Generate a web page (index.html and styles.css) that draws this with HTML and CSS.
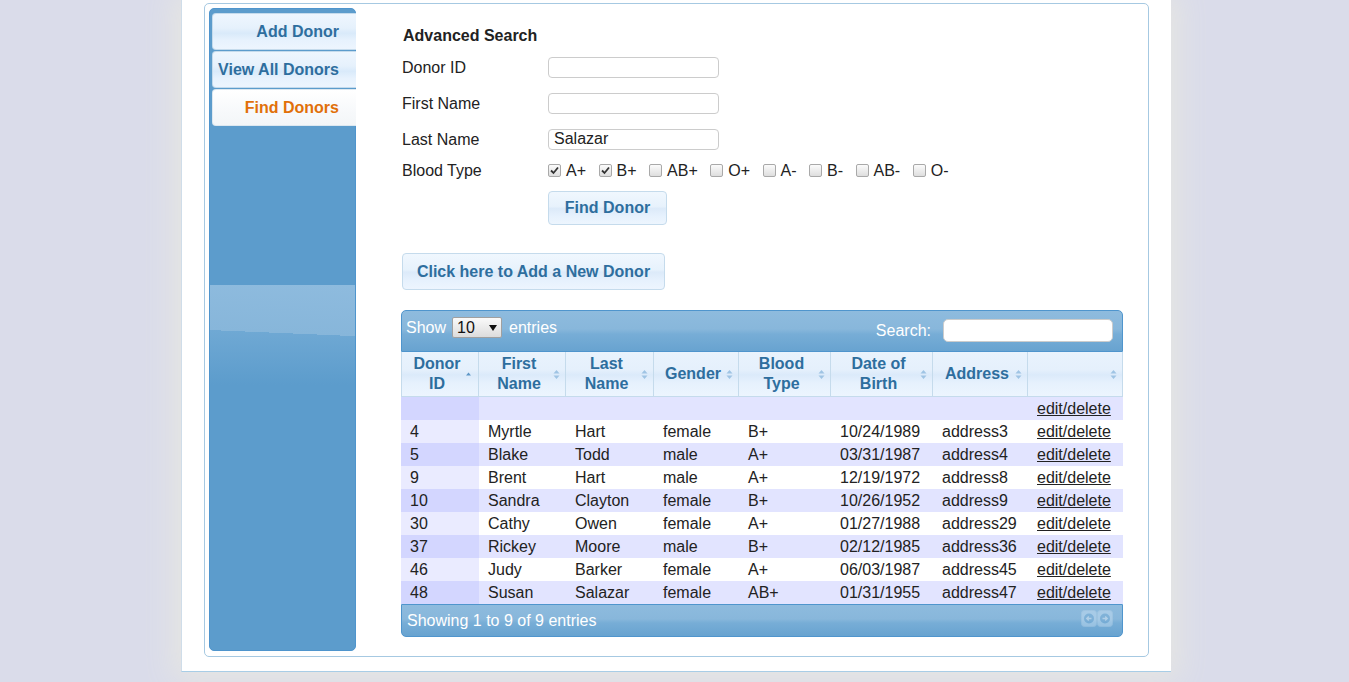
FILE: index.html
```html
<!DOCTYPE html>
<html>
<head>
<meta charset="utf-8">
<title>Find Donors</title>
<link rel="stylesheet" href="styles.css">
</head>
<body>
<div class="page">
  <div class="box">
    <nav class="sidebar">
      <a class="tab">Add Donor</a>
      <a class="tab">View All Donors</a>
      <a class="tab active">Find Donors</a>
    </nav>
    <main class="content">
      <h3 class="title">Advanced Search</h3>
      <div class="form">
        <div class="row"><label class="lbl">Donor ID</label><input class="text" type="text"></div>
        <div class="row"><label class="lbl">First Name</label><input class="text" type="text"></div>
        <div class="row"><label class="lbl">Last Name</label><input class="text" type="text" value="Salazar"></div>
        <div class="row blood"><label class="lbl">Blood Type</label>
          <div class="checks">
            <label class="chk"><input type="checkbox" checked>A+</label>
            <label class="chk"><input type="checkbox" checked>B+</label>
            <label class="chk"><input type="checkbox">AB+</label>
            <label class="chk"><input type="checkbox">O+</label>
            <label class="chk"><input type="checkbox">A-</label>
            <label class="chk"><input type="checkbox">B-</label>
            <label class="chk"><input type="checkbox">AB-</label>
            <label class="chk"><input type="checkbox">O-</label>
          </div>
        </div>
        <div class="btnrow"><button class="btn find">Find Donor</button></div>
      </div>
      <button class="btn add">Click here to Add a New Donor</button>

      <div class="dt">
        <div class="toolbar top">
          <div class="length">Show<select class="sel"><option>10</option></select>entries</div>
          <div class="filter">Search:<input class="search" type="text"></div>
        </div>
        <table class="grid">
          <colgroup>
            <col class="c1"><col class="c2"><col class="c3"><col class="c4"><col class="c5"><col class="c6"><col class="c7"><col class="c8">
          </colgroup>
          <thead>
            <tr>
              <th>Donor ID<svg class="sort" width="7" height="11" viewBox="0 0 7 11"><path d="M3.5 3.5 L6 6.5 H1Z" fill="#5d96c6"/></svg></th>
              <th>First Name<svg class="sort" width="7" height="11" viewBox="0 0 7 11"><path d="M3.5 1 L6.5 4.5 H0.5Z M3.5 10 L0.5 6.5 H6.5Z" fill="#9fc4e4"/></svg></th>
              <th>Last Name<svg class="sort" width="7" height="11" viewBox="0 0 7 11"><path d="M3.5 1 L6.5 4.5 H0.5Z M3.5 10 L0.5 6.5 H6.5Z" fill="#9fc4e4"/></svg></th>
              <th>Gender<svg class="sort" width="7" height="11" viewBox="0 0 7 11"><path d="M3.5 1 L6.5 4.5 H0.5Z M3.5 10 L0.5 6.5 H6.5Z" fill="#9fc4e4"/></svg></th>
              <th>Blood Type<svg class="sort" width="7" height="11" viewBox="0 0 7 11"><path d="M3.5 1 L6.5 4.5 H0.5Z M3.5 10 L0.5 6.5 H6.5Z" fill="#9fc4e4"/></svg></th>
              <th>Date of Birth<svg class="sort" width="7" height="11" viewBox="0 0 7 11"><path d="M3.5 1 L6.5 4.5 H0.5Z M3.5 10 L0.5 6.5 H6.5Z" fill="#9fc4e4"/></svg></th>
              <th>Address<svg class="sort" width="7" height="11" viewBox="0 0 7 11"><path d="M3.5 1 L6.5 4.5 H0.5Z M3.5 10 L0.5 6.5 H6.5Z" fill="#9fc4e4"/></svg></th>
              <th><svg class="sort" width="7" height="11" viewBox="0 0 7 11"><path d="M3.5 1 L6.5 4.5 H0.5Z M3.5 10 L0.5 6.5 H6.5Z" fill="#9fc4e4"/></svg></th>
            </tr>
          </thead>
          <tbody>
            <tr class="odd"><td></td><td></td><td></td><td></td><td></td><td></td><td></td><td><a class="link">edit/delete</a></td></tr>
            <tr class="even"><td>4</td><td>Myrtle</td><td>Hart</td><td>female</td><td>B+</td><td>10/24/1989</td><td>address3</td><td><a class="link">edit/delete</a></td></tr>
            <tr class="odd"><td>5</td><td>Blake</td><td>Todd</td><td>male</td><td>A+</td><td>03/31/1987</td><td>address4</td><td><a class="link">edit/delete</a></td></tr>
            <tr class="even"><td>9</td><td>Brent</td><td>Hart</td><td>male</td><td>A+</td><td>12/19/1972</td><td>address8</td><td><a class="link">edit/delete</a></td></tr>
            <tr class="odd"><td>10</td><td>Sandra</td><td>Clayton</td><td>female</td><td>B+</td><td>10/26/1952</td><td>address9</td><td><a class="link">edit/delete</a></td></tr>
            <tr class="even"><td>30</td><td>Cathy</td><td>Owen</td><td>female</td><td>A+</td><td>01/27/1988</td><td>address29</td><td><a class="link">edit/delete</a></td></tr>
            <tr class="odd"><td>37</td><td>Rickey</td><td>Moore</td><td>male</td><td>B+</td><td>02/12/1985</td><td>address36</td><td><a class="link">edit/delete</a></td></tr>
            <tr class="even"><td>46</td><td>Judy</td><td>Barker</td><td>female</td><td>A+</td><td>06/03/1987</td><td>address45</td><td><a class="link">edit/delete</a></td></tr>
            <tr class="odd"><td>48</td><td>Susan</td><td>Salazar</td><td>female</td><td>AB+</td><td>01/31/1955</td><td>address47</td><td><a class="link">edit/delete</a></td></tr>
          </tbody>
        </table>
        <div class="toolbar bottom">
          <div class="info">Showing 1 to 9 of 9 entries</div>
          <svg class="pager" width="32" height="17" viewBox="0 0 32 17">
            <g opacity="0.35">
              <rect x="0.5" y="0.5" width="15" height="16" rx="3" fill="#dfeffc" stroke="#c5dbec"/>
              <rect x="16.5" y="0.5" width="15" height="16" rx="3" fill="#dfeffc" stroke="#c5dbec"/>
              <circle cx="8" cy="8.5" r="5" fill="#6fa7d3"/>
              <circle cx="24" cy="8.5" r="5" fill="#6fa7d3"/>
              <path d="M10.5 8.5 H6 M7.8 6.5 L5.8 8.5 L7.8 10.5" stroke="#fff" stroke-width="1.4" fill="none"/>
              <path d="M21.5 8.5 H26 M24.2 6.5 L26.2 8.5 L24.2 10.5" stroke="#fff" stroke-width="1.4" fill="none"/>
            </g>
          </svg>
        </div>
      </div>
    </main>
  </div>
</div>
</body>
</html>
```

FILE: styles.css
```css
html, body {
  margin: 0;
  padding: 0;
}

body {
  background: #dadcea;
  font-family: "Liberation Sans", Arial, sans-serif;
  font-size: 16px;
  color: #222;
  height: 682px;
  overflow: hidden;
}

.page {
  margin-left: 181px;
  width: 990px;
  box-sizing: border-box;
  background: #fff;
  border-left: 1px solid #cfdde9;
  border-bottom: 1px solid #a8cde6;
  padding: 3px 22px 14px 22px;
  box-shadow: 0 0 28px 8px #e6e6e2;
}

.box {
  display: flex;
  align-items: flex-start;
  border: 1px solid #a6c9e2;
  border-radius: 5px;
  padding: 4px 4px 5px 4px;
}

/* Sidebar */
.sidebar {
  width: 147px;
  height: 643px;
  box-sizing: border-box;
  flex: none;
  border: 1px solid #4f95cd;
  border-radius: 5px;
  padding: 4px 0 0 2px;
  display: flex;
  flex-direction: column;
  gap: 1px;
  background-color: #5c9ccc;
  background-image:
    linear-gradient(182.4deg, #8ebbde 0, #87b6da 88%, rgba(135,182,218,0) 88%),
    linear-gradient(to bottom, #70a9d4, #5c9ccc);
  background-size: 100% 52px, 100% 56px;
  background-position: 0 276px, 0 320px;
  background-repeat: no-repeat;
}

.tab {
  display: block;
  height: 37px;
  box-sizing: border-box;
  margin-right: -1px;
  border: 1px solid #c5dbec;
  border-right: 0;
  border-radius: 4px 0 0 4px;
  padding-right: 17px;
  text-align: right;
  line-height: 35px;
  font-weight: bold;
  color: #2e6e9e;
  background: linear-gradient(to bottom, #eef6fe 0%, #e6f1fc 40%, #d9eafa 55%, #e7f2fd 75%, #edf5fe 100%);
}

.tab.active {
  color: #e17009;
  background: linear-gradient(to bottom, #ffffff 0%, #f7f9fb 60%, #f3f6f8 100%);
  border-color: #dde8f0;
}

/* Content */
.content {
  margin-left: 45px;
  padding-top: 18px;
  width: 722px;
}

.title {
  margin: 0 0 3px 0;
  padding-left: 2px;
  font-size: 16px;
  line-height: 20px;
  font-weight: bold;
  color: #222;
}

.row {
  display: flex;
  align-items: center;
  height: 36px;
}

.row.blood {
  height: 26px;
}

.lbl {
  width: 147px;
  flex: none;
  padding: 2px 0 0 1px;
  box-sizing: border-box;
}

.text {
  width: 171px;
  height: 21px;
  box-sizing: border-box;
  border: 1px solid #cccccc;
  border-radius: 4px;
  padding: 0 5px;
  font-family: "Liberation Sans", Arial, sans-serif;
  font-size: 16px;
  color: #222;
  background: #fff;
  outline: none;
}

.checks {
  display: flex;
  align-items: center;
  gap: 12.5px;
  padding-top: 1px;
}

.chk {
  display: flex;
  align-items: center;
}

.chk input {
  -webkit-appearance: none;
  appearance: none;
  width: 13px;
  height: 13px;
  margin: 0 5px 0 0;
  box-sizing: border-box;
  border: 1px solid #a9a9a9;
  border-radius: 2px;
  background: linear-gradient(to bottom, #fbfbfb, #dedede);
}

.chk input:checked {
  background-image: url("data:image/svg+xml;utf8,<svg xmlns='http://www.w3.org/2000/svg' width='11' height='11' viewBox='0 0 11 11'><path d='M2 5.5 L4.5 8 L9 2.5' stroke='%23333' stroke-width='1.8' fill='none'/></svg>"), linear-gradient(to bottom, #fbfbfb, #dedede);
  background-repeat: no-repeat;
  background-position: center;
}

.btnrow {
  margin-top: 8px;
  padding-left: 147px;
}

.btn {
  display: block;
  box-sizing: border-box;
  border: 1px solid #c5dbec;
  border-radius: 4px;
  font-family: "Liberation Sans", Arial, sans-serif;
  font-size: 16px;
  font-weight: bold;
  color: #2e6e9e;
  background: linear-gradient(to bottom, #f0f7fe 0%, #e7f2fc 45%, #dceaf9 52%, #e6f1fd 75%, #edf5fe 100%);
  cursor: pointer;
}

.find {
  height: 34px;
  width: 119px;
  padding: 0;
}

.add {
  margin-top: 28px;
  margin-left: 1px;
  height: 37px;
  width: 263px;
  padding: 0;
}

/* Data table */
.dt {
  margin-top: 20px;
  width: 722px;
}

.toolbar {
  box-sizing: border-box;
  border: 1px solid #4f95cd;
  color: #fff;
  background: linear-gradient(to bottom, #8ebbde 0%, #88b7db 45%, #77add6 58%, #68a3d0 100%);
  display: flex;
  justify-content: space-between;
}

.toolbar.top {
  height: 42px;
  border-radius: 5px 5px 0 0;
  padding: 6px 9px 0 4px;
  align-items: flex-start;
}

.length {
  display: flex;
  align-items: center;
  line-height: 21px;
}

.sel {
  -webkit-appearance: none;
  appearance: none;
  width: 50px;
  height: 21px;
  box-sizing: border-box;
  margin: 0 7px 0 6px;
  padding: 0 0 0 4px;
  border: 1px solid #a0a0a0;
  border-radius: 2px;
  font-family: "Liberation Sans", Arial, sans-serif;
  font-size: 16px;
  color: #111;
  background-image: url("data:image/svg+xml;utf8,<svg xmlns='http://www.w3.org/2000/svg' width='8' height='6' viewBox='0 0 8 6'><path d='M0 0 H8 L4 6Z' fill='%23111'/></svg>"), linear-gradient(to bottom, #fafafa, #dcdcdc);
  background-repeat: no-repeat;
  background-position: 36px 7px, 0 0;
}

.filter {
  display: flex;
  align-items: center;
  margin-top: 2px;
}

.search {
  width: 170px;
  height: 23px;
  box-sizing: border-box;
  margin-left: 12px;
  border: 1px solid #cccccc;
  border-radius: 5px;
  background: #fff;
  outline: none;
}

.grid {
  width: 722px;
  border-collapse: separate;
  border-spacing: 0;
  table-layout: fixed;
}

.c1 { width: 78px; }
.c2 { width: 87px; }
.c3 { width: 88px; }
.c4 { width: 85px; }
.c5 { width: 92px; }
.c6 { width: 102px; }
.c7 { width: 95px; }
.c8 { width: 95px; }

.grid th {
  position: relative;
  padding: 2px 16px 2px 10px;
  line-height: 20px;
  height: 40px;
  font-weight: bold;
  color: #2e6e9e;
  text-align: center;
  border-right: 1px solid #c5dbec;
  border-bottom: 1px solid #c5dbec;
  background: linear-gradient(to bottom, #e9f3fd 0%, #e5f0fc 40%, #dbeafa 52%, #e6f1fd 70%, #ecf5fe 100%);
}

.grid th:first-child {
  border-left: 1px solid #c5dbec;
}

.sort {
  position: absolute;
  right: 5px;
  top: 50%;
  margin-top: -5px;
}

.grid th:first-child .sort {
  right: 6px;
}

.grid td {
  height: 23px;
  padding: 0 9px;
  line-height: 23px;
  white-space: nowrap;
  color: #222;
}

.grid tr.odd td { background: #e2e4ff; }
.grid tr.odd td:first-child { background: #d3d6ff; }
.grid tr.even td { background: #ffffff; }
.grid tr.even td:first-child { background: #eaebff; }

.link {
  color: #222;
  text-decoration: underline;
}

.toolbar.bottom {
  height: 33px;
  border-radius: 0 0 5px 5px;
  padding: 0 9px 0 5px;
  align-items: center;
  line-height: 33px;
}

.pager {
  display: block;
  margin-top: -4px;
}
```
